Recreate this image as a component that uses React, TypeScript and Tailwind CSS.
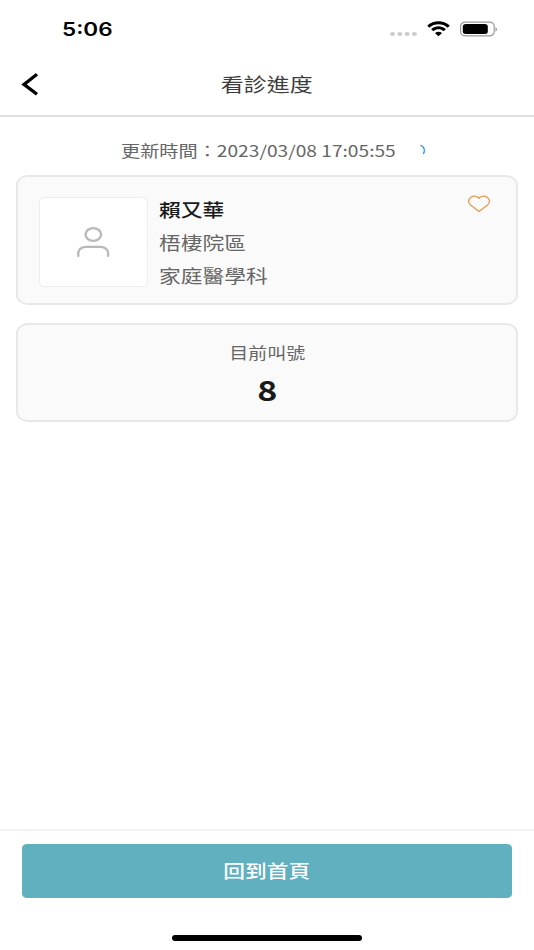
import type { ReactNode } from "react";

const doctor = {
  name: "賴又華",
  branch: "梧棲院區",
  department: "家庭醫學科",
};

function Wide({
  children,
  className = "",
}: {
  children: ReactNode;
  className?: string;
}) {
  return (
    <span
      className={`inline-block whitespace-nowrap scale-x-[1.217] ${className}`}
    >
      {children}
    </span>
  );
}

function StatusBar() {
  return (
    <div className="flex h-[54px] items-start justify-between pl-[62px] pr-[36px] pt-[18px]">
      <Wide className="origin-left font-[Inter,sans-serif] text-[18.5px] font-semibold leading-[23px] text-black">
        5:06
      </Wide>
      <div className="flex items-start">
        <svg className="mt-[13px]" width="28" height="6" viewBox="0 0 28 6">
          <g fill="#cbcbcb">
            <ellipse cx="3.500" cy="3" rx="2.5" ry="2.1" />
            <ellipse cx="10.8" cy="3" rx="2.5" ry="2.1" />
            <ellipse cx="18.1" cy="3" rx="2.5" ry="2.1" />
            <ellipse cx="25.4" cy="3" rx="2.5" ry="2.1" />
          </g>
        </svg>
        <svg
          className="ml-[10px] mt-[3px]"
          width="23"
          height="15"
          viewBox="0 0 17 12"
          preserveAspectRatio="none"
        >
          <path d="M8.5 2.6c2.4 0 4.7.9 6.4 2.6.1.1.3.1.5 0L16.600 3.900c.1-.1.1-.4 0-.5C12.100-.9 4.900-.9.400 3.400c-.1.1-.1.4 0 .5l1.200 1.300c.1.1.3.1.5 0C3.800 3.500 6.100 2.600 8.500 2.600zm0 4c1.300 0 2.600.5 3.500 1.400.1.1.4.1.5 0l1.200-1.300c.1-.1.1-.4 0-.5-2.900-2.800-7.500-2.800-10.400 0-.1.1-.1.4 0 .5L4.500 8c.1.1.4.1.5 0 .9-.9 2.200-1.400 3.500-1.400zm2.300 2.800c.1.1.1.3 0 .5l-2.100 2.100c-.1.1-.3.1-.5 0L6.200 9.900c-.1-.1-.1-.3 0-.5 1.300-1.200 3.300-1.200 4.600 0z" />
        </svg>
        <svg
          className="ml-[9px] mt-[3px]"
          width="39"
          height="16"
          viewBox="0 0 39 16"
        >
          <rect
            x="1.600"
            y="1.100"
            width="33.600"
            height="13.800"
            rx="5"
            ry="4.200"
            fill="none"
            stroke="#999"
            strokeWidth="1.200"
          />
          <rect x="3.800" y="3" width="25" height="10" rx="3" ry="2.500" />
          <path d="M36.500 6c2 1 2 3.700 0 4.700z" fill="#999" />
        </svg>
      </div>
    </div>
  );
}

function Header() {
  return (
    <header className="h-[117px] border-b-2 border-[#e1e1e1]">
      <StatusBar />
      <div className="grid h-[61px] grid-cols-[1fr_auto_1fr] items-center">
        <button className="ml-[21px] w-fit -translate-y-px" aria-label="返回">
          <svg width="18" height="24" viewBox="0 0 18 24" fill="none">
            <path d="M16 2.300L3 12.400l13 9.800" stroke="#000" strokeWidth="3.300" />
          </svg>
        </button>
        <h1 className="-mt-[2px] text-[18.9px] leading-7 text-[#3c3c3c]">
          <Wide>看診進度</Wide>
        </h1>
      </div>
    </header>
  );
}

function DoctorCard() {
  return (
    <section className="flex h-[130px] items-start rounded-[12px/10px] border-2 border-[#e8e8e8] bg-[#fafafa] pl-[21px] pr-[25px] pt-[20px]">
      <div className="flex h-[90px] w-[109px] items-center justify-center rounded-[6px/5px] border border-[#eeeeee] bg-white">
        <svg
          className="-translate-x-px"
          width="34"
          height="32"
          viewBox="0 0 34 32"
          fill="none"
        >
          <g stroke="#b9b9b9" strokeWidth="2.400" strokeLinecap="round">
            <ellipse cx="17.300" cy="8.500" rx="7.800" ry="6.400" />
            <path d="M2.300 29.800v-2.700c0-3.500 3.300-6.200 7.500-6.200h14.800c4.200 0 7.500 2.700 7.500 6.200v2.700" />
          </g>
        </svg>
      </div>
      <div className="-mt-[4px] ml-[11px] flex flex-1 flex-col items-start text-[17.9px] leading-[33px] text-[#666]">
        <Wide className="origin-left font-medium text-[#1a1a1a]">
          {doctor.name}
        </Wide>
        <Wide className="origin-left">{doctor.branch}</Wide>
        <Wide className="origin-left">{doctor.department}</Wide>
      </div>
      <svg
        className="-mt-[2px]"
        width="24"
        height="18"
        viewBox="0 0 24 18"
        fill="none"
      >
        <path
          d="M12 3.200C9.900.8 5.900.5 3.600 2.500.900 4.800.900 7.800 3.500 10L12 16.600 20.500 10c2.600-2.200 2.600-5.200-.1-7.500C18.100.5 14.100.8 12 3.200z"
          stroke="#e8994f"
          strokeWidth="1.300"
          strokeLinejoin="round"
        />
      </svg>
    </section>
  );
}

export default function App() {
  return (
    <div className="flex h-[950px] w-[534px] flex-col bg-white font-['Noto_Sans_CJK_TC',sans-serif]">
      <Header />
      <main className="flex-1 px-4">
        <div className="flex h-[58px] items-center pl-[105px] pt-[9px] text-[15.750px] text-[#666]">
          <Wide className="origin-left">更新時間：2023/03/08 17:05:55</Wide>
          <svg
            className="-mt-[2px] ml-auto mr-[91px]"
            width="8"
            height="12"
            viewBox="0 0 8 12"
            fill="none"
          >
            <path d="M1.500 1.200c4 1.700 5 5.300 2.800 8.800" stroke="#3b9cf2" strokeWidth="1.400" />
          </svg>
        </div>
        <DoctorCard />
        <section className="mt-[18px] flex h-[99px] flex-col items-center rounded-[12px/10px] border-2 border-[#e8e8e8] bg-[#fafafa] pt-[15px]">
          <Wide className="text-[15.600px] leading-6 text-[#666]">目前叫號</Wide>
          <Wide className="mt-[7px] text-[28px] font-bold leading-9 text-[#1a1a1a]">
            8
          </Wide>
        </section>
      </main>
      <footer className="flex h-[121px] flex-col items-center border-t-2 border-[#f1f1f1] px-[22px] pt-[13px]">
        <button className="h-[54px] w-full rounded-[5px/4px] bg-[#60b0bf] pb-[2px] text-[17.900px] font-medium text-white">
          <Wide>回到首頁</Wide>
        </button>
        <div className="mt-[37px] h-[6px] w-[190px] rounded-full bg-black" />
      </footer>
    </div>
  );
}
